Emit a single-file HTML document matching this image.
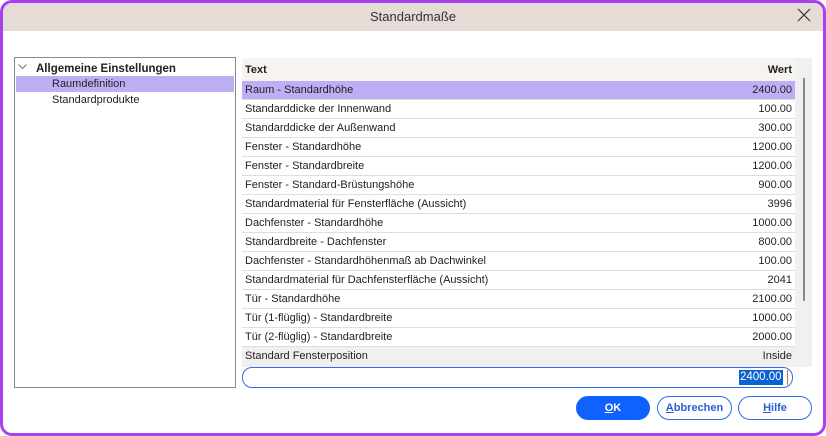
<!DOCTYPE html>
<html><head><meta charset="utf-8"><style>
*{box-sizing:border-box;margin:0;padding:0}
body{width:826px;height:436px;background:#fff;font-family:"Liberation Sans",sans-serif;font-size:11px;color:#222;position:relative;overflow:hidden}
.frame{position:absolute;left:0;top:0;width:826px;height:436px;border:3px solid #a541f2;border-radius:12px;overflow:hidden;background:#fff}
.title{position:absolute;left:0;top:0;right:0;height:28px;background:#e5dbd7;text-align:center;line-height:28px;font-size:13px;color:#333}
.x{position:absolute;right:12px;top:5px}
.tree{position:absolute;left:11px;top:54px;width:222px;height:331px;border:1px solid #8a8a8e}
.tree div{position:absolute;height:16px;line-height:16px}
.tbl{position:absolute;left:239px;top:55px;width:570px;height:309px;background:#f0f0f0}
.row{position:absolute;left:0;width:553px;height:19px;line-height:19px;border-bottom:1px solid #e3dcd8;background:#fff;padding:0 3px}
.row span{float:right;padding-right:0}
.btn{position:absolute;top:393px;height:24px;border:1px solid #2f6cf0;border-radius:12px;text-align:center;line-height:22px;font-weight:bold;font-size:11px;color:#2a5fcf;background:#fff}
u{text-decoration:underline}
</style></head><body>
<div class="frame">
<div class="title">Standardmaße
<svg class="x" width="14" height="14" viewBox="0 0 14 14"><path d="M1 1L13 13M13 1L1 13" stroke="#333" stroke-width="1.2"/></svg></div>
<div class="tree">
<svg style="position:absolute;left:3px;top:6px" width="9" height="6" viewBox="0 0 9 6"><path d="M0.5 0.5L4.5 4.5L8.5 0.5" fill="none" stroke="#777"/></svg>
<div style="left:21px;top:3px;font-weight:bold;font-size:11.5px">Allgemeine Einstellungen</div>
<div style="left:1px;top:18px;width:218px;background:#beaff5"></div>
<div style="left:37px;top:18px">Raumdefinition</div>
<div style="left:37px;top:34px">Standardprodukte</div>
</div>
<div class="tbl">
<div class="row" style="top:0;height:23px;line-height:24px;background:#f7f3f1;font-weight:bold;border:none">Text<span>Wert</span></div>
<div class="row" style="top:23px;background:#beaff5">Raum - Standardhöhe<span>2400.00</span></div>
<div class="row" style="top:42px">Standarddicke der Innenwand<span>100.00</span></div>
<div class="row" style="top:61px">Standarddicke der Außenwand<span>300.00</span></div>
<div class="row" style="top:80px">Fenster - Standardhöhe<span>1200.00</span></div>
<div class="row" style="top:99px">Fenster - Standardbreite<span>1200.00</span></div>
<div class="row" style="top:118px">Fenster - Standard-Brüstungshöhe<span>900.00</span></div>
<div class="row" style="top:137px">Standardmaterial für Fensterfläche (Aussicht)<span>3996</span></div>
<div class="row" style="top:156px">Dachfenster - Standardhöhe<span>1000.00</span></div>
<div class="row" style="top:175px">Standardbreite - Dachfenster<span>800.00</span></div>
<div class="row" style="top:194px">Dachfenster - Standardhöhenmaß ab Dachwinkel<span>100.00</span></div>
<div class="row" style="top:213px">Standardmaterial für Dachfensterfläche (Aussicht)<span>2041</span></div>
<div class="row" style="top:232px">Tür - Standardhöhe<span>2100.00</span></div>
<div class="row" style="top:251px">Tür (1-flüglig) - Standardbreite<span>1000.00</span></div>
<div class="row" style="top:270px">Tür (2-flüglig) - Standardbreite<span>2000.00</span></div>
<div class="row" style="top:289px;background:#f0f0f0;border:none">Standard Fensterposition<span>Inside</span></div>
<div style="position:absolute;left:561px;top:20px;width:2px;height:223px;background:#888"></div>
</div>
<div style="position:absolute;left:239px;top:364px;width:551px;height:21px;border:1px solid #2f6cf0;border-radius:10px"></div>
<div style="position:absolute;left:736px;top:367px;height:15px;line-height:15px;background:#0a64d0;color:#fff;padding:0 1px;font-size:11.5px">2400.00</div>
<div style="position:absolute;left:784px;top:367px;width:1px;height:15px;background:#d07020"></div>
<div class="btn" style="left:573px;width:74px;background:#0f62fe;border-color:#0f62fe;color:#fff"><u>O</u>K</div>
<div class="btn" style="left:654px;width:75px"><u>A</u>bbrechen</div>
<div class="btn" style="left:735px;width:74px"><u>H</u>ilfe</div>
</div>
</body></html>
